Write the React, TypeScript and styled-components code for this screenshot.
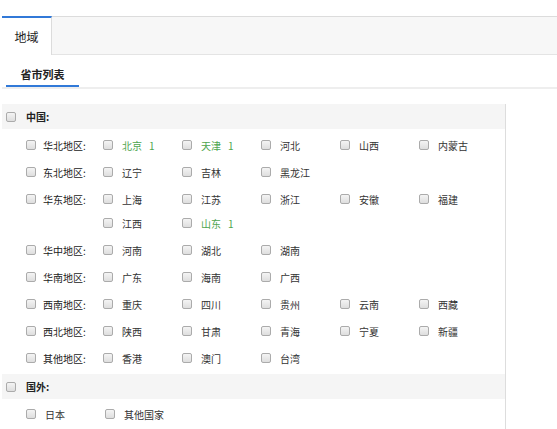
import React from "react";
import styled, { createGlobalStyle } from "styled-components";

const GlobalStyle = createGlobalStyle`
  body {
    margin: 0;
    background: #fff;
    font-family: "Noto Sans CJK SC", "Noto Sans", sans-serif;
    font-size: 10px;
    color: #333;
  }
`;

const Page = styled.div`
  width: 557px;
  height: 429px;
  overflow: hidden;
  padding-left: 2px;
  box-sizing: border-box;
`;

const Crumb = styled.div`
  height: 16px;
  overflow: hidden;
  font-size: 12px;
  line-height: 12px;
  margin-left: -2px;
`;

const CrumbLine = styled.div`
  margin-top: -12px;
  display: flex;
  gap: 30px;
  white-space: nowrap;
`;

const CrumbItem = styled.span<{ $muted?: boolean }>`
  color: ${(p) => (p.$muted ? "#999" : "#3a7bd5")};
`;

const TabBar = styled.div`
  display: flex;
  height: 37px;
  background: #f7f7f7;
  border-top: 1px solid #dcdcdc;
  border-bottom: 1px solid #e4e4e4;
`;

const Tab = styled.div<{ $active?: boolean }>`
  width: 50px;
  margin-top: -1px;
  margin-bottom: -1px;
  display: flex;
  align-items: center;
  justify-content: center;
  font-size: 12px;
  color: #222;
  background: ${(p) => (p.$active ? "#fff" : "transparent")};
  border-top: 2px solid ${(p) => (p.$active ? "#3179d8" : "transparent")};
  border-right: 1px solid #dcdcdc;
  box-sizing: border-box;
`;

const SubTabs = styled.div`
  display: flex;
  height: 32px;
  border-bottom: 2px solid #eeeeee;
`;

const SubTab = styled.div<{ $active?: boolean }>`
  margin-left: 4px;
  width: 73px;
  height: 32px;
  box-sizing: border-box;
  padding-top: 6px;
  text-align: center;
  line-height: 26px;
  font-size: 11px;
  font-weight: bold;
  color: #222;
  border-bottom: 2px solid ${(p) => (p.$active ? "#3179d8" : "transparent")};
`;

const Content = styled.div`
  margin-top: 15px;
  width: 503px;
  border-right: 1px solid #dddddd;
  padding-bottom: 40px;
`;

const GroupHead = styled.div`
  height: 25px;
  display: flex;
  align-items: center;
  padding-left: 4px;
  background: #f5f5f5;
  font-weight: bold;
  color: #222;
`;

const Box = styled.span`
  width: 10px;
  height: 10px;
  flex: none;
  box-sizing: border-box;
  border: 1px solid #ababab;
  border-radius: 2px;
  background: linear-gradient(#f4f4f4, #dedede);
`;

const HeadLabel = styled.span`
  margin-left: 10px;
`;

const RegionList = styled.div<{ $pad: string }>`
  padding: ${(p) => p.$pad};
`;

const RegionRow = styled.div`
  display: flex;
  padding: 1.5px 0 1.5px 24px;
`;

const RegionHead = styled.div`
  width: 77px;
  height: 24px;
  display: flex;
  align-items: center;
  flex: none;
`;

const RegionLabel = styled.span`
  margin-left: 7px;
  color: #222;
`;

const Provinces = styled.div`
  display: flex;
  flex-wrap: wrap;
  width: 400px;
`;

const Item = styled.div`
  width: 79px;
  height: 24px;
  display: flex;
  align-items: center;
`;

const ItemLabel = styled.span<{ $count?: boolean }>`
  margin-left: 9px;
  color: ${(p) => (p.$count ? "#4ea54e" : "#333")};
  white-space: nowrap;
`;

const Count = styled.span`
  margin-left: 7px;
`;

type Prov = { name: string; count?: number };

const regions: { name: string; provinces: Prov[] }[] = [
  {
    name: "华北地区",
    provinces: [
      { name: "北京", count: 1 },
      { name: "天津", count: 1 },
      { name: "河北" },
      { name: "山西" },
      { name: "内蒙古" },
    ],
  },
  { name: "东北地区", provinces: [{ name: "辽宁" }, { name: "吉林" }, { name: "黑龙江" }] },
  {
    name: "华东地区",
    provinces: [
      { name: "上海" },
      { name: "江苏" },
      { name: "浙江" },
      { name: "安徽" },
      { name: "福建" },
      { name: "江西" },
      { name: "山东", count: 1 },
    ],
  },
  { name: "华中地区", provinces: [{ name: "河南" }, { name: "湖北" }, { name: "湖南" }] },
  { name: "华南地区", provinces: [{ name: "广东" }, { name: "海南" }, { name: "广西" }] },
  {
    name: "西南地区",
    provinces: [{ name: "重庆" }, { name: "四川" }, { name: "贵州" }, { name: "云南" }, { name: "西藏" }],
  },
  {
    name: "西北地区",
    provinces: [{ name: "陕西" }, { name: "甘肃" }, { name: "青海" }, { name: "宁夏" }, { name: "新疆" }],
  },
  { name: "其他地区", provinces: [{ name: "香港" }, { name: "澳门" }, { name: "台湾" }] },
];

const foreign = ["日本", "其他国家"];

function ProvItem({ p }: { p: Prov }) {
  return (
    <Item>
      <Box />
      <ItemLabel $count={!!p.count}>
        {p.name}
        {p.count ? <Count>{p.count}</Count> : null}
      </ItemLabel>
    </Item>
  );
}

export default function App() {
  return (
    <Page>
      <GlobalStyle />
      <Crumb>
        <CrumbLine>
          <CrumbItem>首页 ›</CrumbItem>
          <CrumbItem>基础设置</CrumbItem>
          <CrumbItem $muted>地域</CrumbItem>
        </CrumbLine>
      </Crumb>
      <TabBar>
        <Tab $active>地域</Tab>
      </TabBar>
      <SubTabs>
        <SubTab $active>省市列表</SubTab>
      </SubTabs>
      <Content>
        <GroupHead>
          <Box />
          <HeadLabel>中国:</HeadLabel>
        </GroupHead>
        <RegionList $pad="2.5px 0">
          {regions.map((r) => (
            <RegionRow key={r.name}>
              <RegionHead>
                <Box />
                <RegionLabel>{r.name}:</RegionLabel>
              </RegionHead>
              <Provinces>
                {r.provinces.map((p) => (
                  <ProvItem key={p.name} p={p} />
                ))}
              </Provinces>
            </RegionRow>
          ))}
        </RegionList>
        <GroupHead>
          <Box />
          <HeadLabel>国外:</HeadLabel>
        </GroupHead>
        <RegionList $pad="1.5px 0">
          <RegionRow>
            <Provinces>
              {foreign.map((n) => (
                <ProvItem key={n} p={{ name: n }} />
              ))}
            </Provinces>
          </RegionRow>
        </RegionList>
      </Content>
    </Page>
  );
}
